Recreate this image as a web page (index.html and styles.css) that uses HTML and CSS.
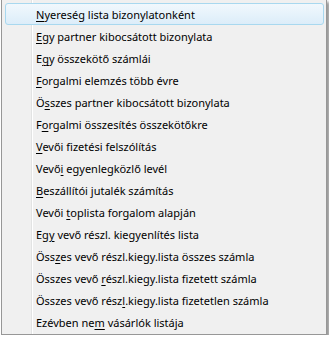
FILE: index.html
```html
<!DOCTYPE html>
<html lang="hu">
<head>
  <meta charset="UTF-8">
  <title>Listák</title>
  <link rel="stylesheet" href="styles.css">
</head>
<body>
  <!-- context menu -->
  <div class="menu">
    <div class="item active"><u>N</u>yereség lista bizonylatonként</div>
    <div class="item"><u>E</u>gy partner kibocsátott bizonylata</div>
    <div class="item">E<u>g</u>y összekötő számlái</div>
    <div class="item"><u>F</u>orgalmi elemzés több évre</div>
    <div class="item">Ö<u>s</u>szes partner kibocsátott bizonylata</div>
    <div class="item">F<u>o</u>rgalmi összesítés összekötőkre</div>
    <div class="item"><u>V</u>evői fizetési felszólítás</div>
    <div class="item">Vevő<u>i</u> egyenlegközlő levél</div>
    <div class="item"><u>B</u>eszállítói jutalék számítás</div>
    <div class="item">Vevői <u>t</u>oplista forgalom alapján</div>
    <div class="item">Eg<u>y</u> vevő részl. kiegyenlítés lista</div>
    <div class="item">Öss<u>z</u>es vevő részl.kiegy.lista összes számla</div>
    <div class="item">Összes vevő <u>r</u>észl.kiegy.lista fizetett számla</div>
    <div class="item">Összes vevő rész<u>l</u>.kiegy.lista fizetetlen számla</div>
    <div class="item">Ezévben ne<u>m</u> vásárlók listája</div>
  </div>
</body>
</html>
```

FILE: styles.css
```css
body {
  margin: 0;
  background: #ffffff;
  font-family: "Noto Sans", "DejaVu Sans", sans-serif;
  font-size: 11px;
  color: #000;
}
.menu {
  position: relative;
  width: 320px;
  margin: -1px 0 0 1px;
  padding: 3px 2px 1px 2px;
  background: #f0f0f0;
  border: 1px solid #979797;
  box-shadow: 3px 3px 3px rgba(0,0,0,0.4);
}
/* gutter lines */
.menu::before {
  content: "";
  position: absolute;
  top: 0;
  bottom: 0;
  left: 29px;
  width: 1px;
  background: #e2e3e3;
  border-right: 1px solid #ffffff;
}
.item {
  position: relative;
  height: 22px;
  line-height: 21px;
  padding-left: 31px;
  border: 1px solid transparent;
  border-radius: 3px;
  box-sizing: border-box;
  white-space: nowrap;
}
.item.active {
  margin-left: 1px;
  padding-left: 30px;
  background: linear-gradient(#f1f8fd, #dcedf9);
  border-color: #a8d8ef;
}
u {
  text-decoration-thickness: 1px;
  text-underline-offset: 2px;
}
```
